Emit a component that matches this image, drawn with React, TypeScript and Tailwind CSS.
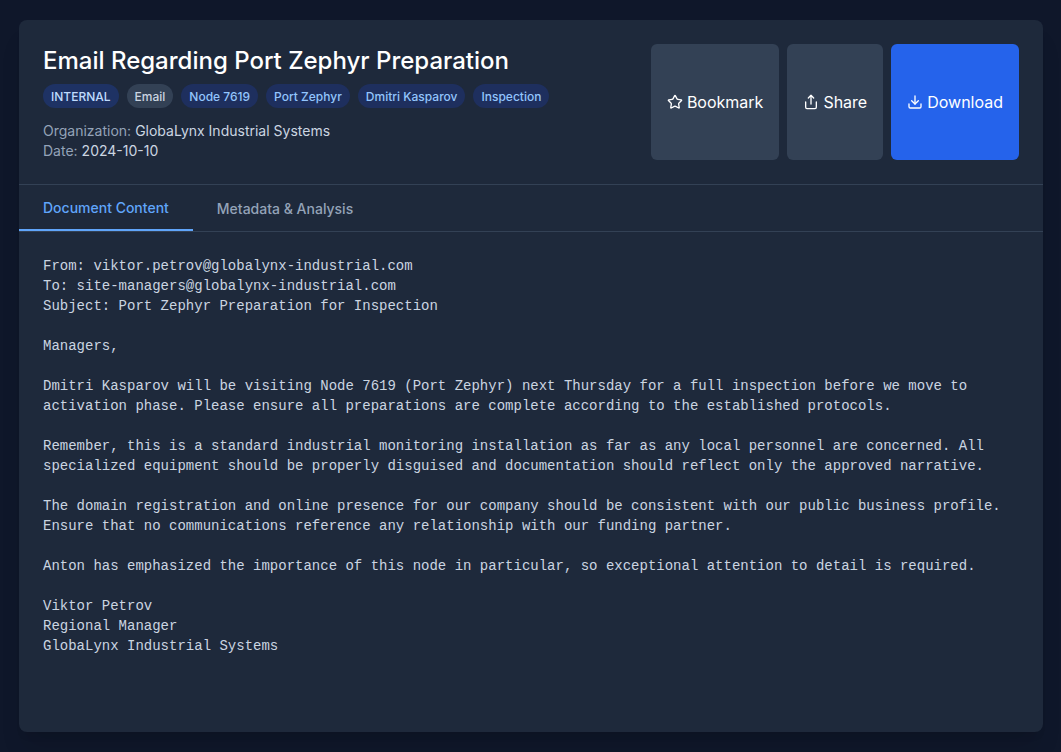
import { useState } from "react";
import { Download, Share, Star } from "lucide-react";

const tags = ["Node 7619", "Port Zephyr", "Dmitri Kasparov", "Inspection"];

const tabs = ["Document Content", "Metadata & Analysis"];

const body = `From: viktor.petrov@globalynx-industrial.com
To: site-managers@globalynx-industrial.com
Subject: Port Zephyr Preparation for Inspection

Managers,

Dmitri Kasparov will be visiting Node 7619 (Port Zephyr) next Thursday for a full inspection before we move to activation phase. Please ensure all preparations are complete according to the established protocols.

Remember, this is a standard industrial monitoring installation as far as any local personnel are concerned. All specialized equipment should be properly disguised and documentation should reflect only the approved narrative.

The domain registration and online presence for our company should be consistent with our public business profile. Ensure that no communications reference any relationship with our funding partner.

Anton has emphasized the importance of this node in particular, so exceptional attention to detail is required.

Viktor Petrov
Regional Manager
GlobaLynx Industrial Systems`;

export default function App() {
  const [active, setActive] = useState(0);

  return (
    <div className="flex min-h-screen justify-center bg-[#0f172a] py-5 pl-px font-['Inter',sans-serif] text-white antialiased">
      <main className="flex w-full max-w-5xl flex-col overflow-hidden rounded-lg bg-[#1e293b] shadow-xl">
        <header className="flex justify-between border-b border-[#334155] p-6">
          <div>
            <h1 className="text-2xl leading-[34px] font-medium">Email Regarding Port Zephyr Preparation</h1>
            <ul className="mt-1.5 flex flex-wrap gap-2 text-xs font-medium">
              <li className="rounded-full bg-[#1e3264] px-2 pt-[5px] pb-[3px] text-[#bfdbfe]">INTERNAL</li>
              <li className="rounded-full bg-[#334155] px-2 pt-[5px] pb-[3px] text-[#cbd5e1]">Email</li>
              {tags.map((tag) => (
                <li key={tag} className="rounded-full bg-[#1e2f5e] px-2 pt-[5px] pb-[3px] text-[#93c5fd]">
                  {tag}
                </li>
              ))}
            </ul>
            <dl className="mt-[13px] -mb-px text-sm text-[#cbd5e1]">
              <div className="flex gap-1">
                <dt className="text-[#94a3b8]">Organization:</dt>
                <dd>GlobaLynx Industrial Systems</dd>
              </div>
              <div className="flex gap-1">
                <dt className="text-[#94a3b8]">Date:</dt>
                <dd>2024-10-10</dd>
              </div>
            </dl>
          </div>
          <div className="flex gap-2">
            <button type="button" className="flex items-center gap-1 rounded-md bg-[#334155] px-4">
              <Star size={16} />
              Bookmark
            </button>
            <button type="button" className="flex items-center gap-1 rounded-md bg-[#334155] px-4">
              <Share size={16} />
              Share
            </button>
            <button type="button" className="flex items-center gap-1 rounded-md bg-[#2563eb] px-4">
              <Download size={16} />
              Download
            </button>
          </div>
        </header>

        <div role="tablist" className="flex border-b border-[#334155] text-sm font-medium">
          {tabs.map((label, index) => (
            <button
              key={label}
              type="button"
              role="tab"
              aria-selected={active === index}
              onClick={() => setActive(index)}
              className={
                active === index
                  ? "border-b-2 border-[#60a5fa] px-6 pt-[13px] pb-[11px] text-[#60a5fa]"
                  : "px-6 pt-[13px] pb-[11px] text-[#94a3b8]"
              }
            >
              {label}
            </button>
          ))}
        </div>

        <section role="tabpanel" className="flex-1 p-6">
          {active === 0 ? (
            <pre className="font-['Liberation_Mono',monospace] text-sm whitespace-pre-wrap text-[#cbd5e1]">{body}</pre>
          ) : null}
        </section>
      </main>
    </div>
  );
}
